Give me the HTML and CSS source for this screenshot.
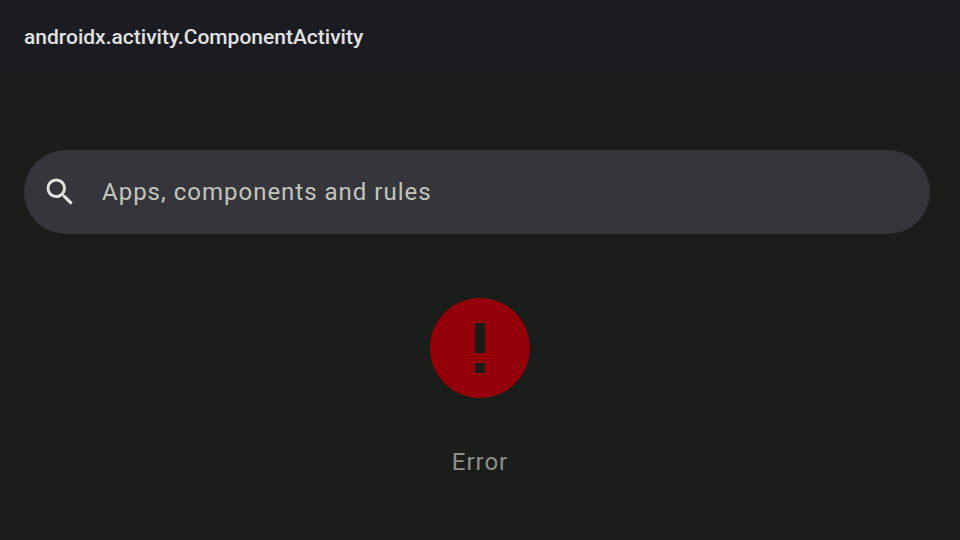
FILE: index.html
```html
<!DOCTYPE html>
<html lang="en">
<head>
<meta charset="utf-8">
<meta name="viewport" content="width=device-width, initial-scale=1">
<title>androidx.activity.ComponentActivity</title>
<link rel="stylesheet" href="styles.css">
</head>
<body>
<header class="app-bar">
  <h1 class="app-title">androidx.activity.ComponentActivity</h1>
</header>
<main class="content">
  <label class="search">
    <svg class="search-icon" viewBox="0 0 24 24" aria-hidden="true"><path d="M15.5 14h-.79l-.28-.27A6.471 6.471 0 0 0 16 9.5 6.5 6.5 0 1 0 9.5 16c1.61 0 3.09-.59 4.23-1.57l.27.28v.79l5 4.99L20.49 19l-4.99-5zm-6 0C7.01 14 5 11.99 5 9.5S7.01 5 9.5 5 14 7.01 14 9.5 11.99 14 9.5 14z"/></svg>
    <input class="search-input" type="text" placeholder="Apps, components and rules" aria-label="Apps, components and rules">
  </label>
  <section class="error">
    <svg class="error-icon" viewBox="2 2 20 20" aria-hidden="true"><path d="M12 2C6.48 2 2 6.48 2 12s4.48 10 10 10 10-4.48 10-10S17.52 2 12 2zm1 15h-2v-2h2v2zm0-4h-2V7h2v6z"/></svg>
    <p class="error-text">Error</p>
  </section>
</main>
</body>
</html>
```

FILE: styles.css
```css
* {
  box-sizing: border-box;
}

body {
  margin: 0;
  min-height: 100vh;
  background: #1b1d1a;
  font-family: Roboto, sans-serif;
}

.app-bar {
  padding: 22px 24px 20px;
  background: #1b1c22;
}

.app-title {
  margin: 0;
  color: #e2e2e2;
  font-size: 21px;
  font-weight: 500;
  line-height: 30px;
}

.content {
  padding: 78px 30px 0 24px;
}

.search {
  display: flex;
  align-items: center;
  gap: 24px;
  height: 84px;
  padding: 0 24px 0 18px;
  border-radius: 42px;
  background: #36353b;
}

.search-icon {
  flex: none;
  width: 36px;
  height: 36px;
  fill: #e2e3dd;
}

.search-input {
  flex: 1;
  min-width: 0;
  padding: 0;
  border: 0;
  outline: 0;
  background: transparent;
  color: #c1c6bd;
  font: 24px/36px Roboto, sans-serif;
  letter-spacing: 1px;
}

.search-input::placeholder {
  color: #c1c6bd;
  opacity: 1;
}

.error {
  display: flex;
  flex-direction: column;
  align-items: center;
  gap: 46px;
  margin-right: -6px;
  padding-top: 64px;
}

.error-icon {
  width: 100px;
  height: 100px;
  fill: #93000a;
}

.error-text {
  margin: 0;
  color: #8b918a;
  font-size: 24px;
  line-height: 36px;
  letter-spacing: 1px;
}
```
